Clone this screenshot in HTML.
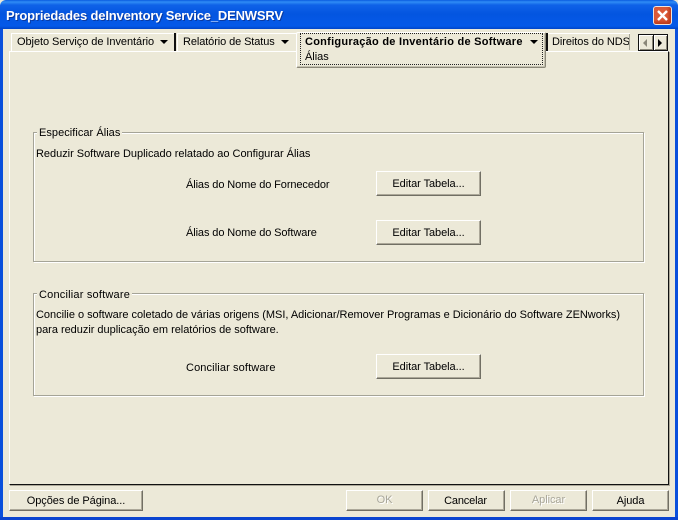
<!DOCTYPE html>
<html><head><meta charset="utf-8">
<style>
html,body{margin:0;padding:0;}
body{width:678px;height:520px;overflow:hidden;position:relative;background:#ECE9D8;font-family:"Liberation Sans",sans-serif;font-size:11px;color:#000;}
.a{position:absolute;box-sizing:border-box;}
.t{position:absolute;white-space:nowrap;line-height:13px;letter-spacing:-.025px;}
.btn{position:absolute;box-sizing:border-box;background:#ECE9D8;border-top:1px solid #fff;border-left:1px solid #fff;border-right:1px solid #716f64;border-bottom:1px solid #716f64;box-shadow:inset -1px -1px 0 #aca899;text-align:center;line-height:25px;white-space:nowrap;letter-spacing:-.06px;}
.dis{color:#a8a699;text-shadow:1px 1px 0 #fff;}
.arr{position:absolute;width:0;height:0;border-left:4px solid transparent;border-right:4px solid transparent;border-top:4px solid #000;}
.gb{position:absolute;box-sizing:border-box;border:1px solid #a5a497;box-shadow:1px 1px 0 #fff, inset 1px 1px 0 #fff;}
.leg{position:absolute;background:#ECE9D8;white-space:nowrap;line-height:13px;padding:0 2px;letter-spacing:.04px;}
</style></head><body>
<div class="a" style="left:0;top:0;width:678px;height:29px;background:linear-gradient(to bottom,#0a5be0 0,#2f8cf5 2px,#0f62e8 5px,#0355e0 14px,#0458e6 22px,#0459e8 26px,#0044c8 29px);border-radius:6px 6px 0 0;"></div>
<div class="a" style="left:0;top:29px;width:3px;height:491px;background:#0a50dc;"></div>
<div class="a" style="right:0;top:29px;width:3px;height:491px;background:#0a50dc;"></div>
<div class="a" style="left:0;top:517px;width:678px;height:3px;background:#0a44d0;"></div>
<div class="t" style="left:6px;top:8px;font-size:13px;line-height:16px;font-weight:bold;color:#fff;text-shadow:1px 1px 0 #0a3aa0;letter-spacing:-.17px;">Propriedades deInventory Service_DENWSRV</div>
<div class="a" style="left:653px;top:6px;width:19px;height:19px;background:#dc5a38;border:1px solid #f0e4dc;border-radius:3px;box-shadow:inset -2px -2px 3px #b83818;">
<svg width="17" height="17" style="position:absolute;left:0;top:0"><path d="M4 4L13 13M13 4L4 13" stroke="#fff" stroke-width="2.4"/></svg></div>

<!-- panel -->
<div class="a" style="left:9px;top:51px;width:660px;height:434px;border-top:1px solid #fff;border-left:1px solid #fff;border-right:1px solid #111;border-bottom:1px solid #111;box-shadow:1px 1px 0 #aca899;"></div>

<!-- tabs -->
<div class="a" style="left:11px;top:33px;width:163px;height:18px;border-top:1px solid #fff;border-left:1px solid #fff;"></div>
<div class="a" style="left:174px;top:33px;width:2px;height:18px;background:#111;"></div>
<div class="t" style="left:17px;top:36px;letter-spacing:-.06px;">Objeto Serviço de Inventário</div>
<div class="arr" style="left:160px;top:40px;"></div>
<div class="a" style="left:177px;top:33px;width:119px;height:18px;border-top:1px solid #fff;border-left:1px solid #fff;"></div>
<div class="t" style="left:183px;top:36px;letter-spacing:-.1px;">Relatório de Status</div>
<div class="arr" style="left:281px;top:40px;"></div>

<div class="a" style="left:296px;top:32px;width:250px;height:36px;background:#ECE9D8;border-top:1px solid #fff;border-left:1px solid #fff;border-right:1px solid #8a8778;border-bottom:1px solid #8a8778;border-radius:2px;box-shadow:inset -1px -1px 0 #c4c1b0;"></div>
<div class="a" style="left:300px;top:33px;width:243px;height:32px;border:1px dotted #222;"></div>
<div class="t" style="left:305px;top:36px;font-weight:bold;letter-spacing:.26px;">Configuração de Inventário de Software</div>
<div class="arr" style="left:530px;top:40px;"></div>
<div class="t" style="left:305px;top:51px;">Álias</div>

<div class="a" style="left:546px;top:33px;width:2px;height:18px;background:#111;"></div>
<div class="a" style="left:548px;top:33px;width:82px;height:18px;border-top:1px solid #fff;"></div>
<div class="t" style="left:552px;top:36px;letter-spacing:-.06px;">Direitos do NDS</div>
<div class="a" style="left:628px;top:34px;width:2px;height:16px;border-right:1px solid #a5a497;"></div>

<!-- scroll buttons -->
<div class="a" style="left:638px;top:34px;width:15px;height:17px;background:#ECE9D8;border:1px solid #111;border-right:0;box-shadow:inset 1px 1px 0 #fff,inset -1px -1px 0 #8a8778;"></div>
<div class="a" style="left:653px;top:34px;width:15px;height:17px;background:#ECE9D8;border:1px solid #111;box-shadow:inset 1px 1px 0 #fff,inset -1px -1px 0 #8a8778;"></div>
<div class="a" style="left:643px;top:39px;width:0;height:0;border-top:4px solid transparent;border-bottom:4px solid transparent;border-right:4px solid #8a8778;"></div>
<div class="a" style="left:658px;top:39px;width:0;height:0;border-top:4px solid transparent;border-bottom:4px solid transparent;border-left:4px solid #000;"></div>

<!-- group 1 -->
<div class="gb" style="left:33px;top:132px;width:611px;height:130px;"></div>
<div class="leg" style="left:37px;top:127px;">Especificar Álias</div>
<div class="t" style="left:36px;top:148px;">Reduzir Software Duplicado relatado ao Configurar Álias</div>
<div class="t" style="left:186px;top:179px;letter-spacing:-.1px;">Álias do Nome do Fornecedor</div>
<div class="btn" style="left:376px;top:171px;width:105px;height:25px;">Editar Tabela...</div>
<div class="t" style="left:186px;top:227px;letter-spacing:-.1px;">Álias do Nome do Software</div>
<div class="btn" style="left:376px;top:220px;width:105px;height:25px;">Editar Tabela...</div>

<!-- group 2 -->
<div class="gb" style="left:33px;top:293px;width:611px;height:103px;"></div>
<div class="leg" style="left:37px;top:289px;letter-spacing:.2px;">Conciliar software</div>
<div class="t" style="left:36px;top:309px;">Concilie o software coletado de várias origens (MSI, Adicionar/Remover Programas e Dicionário do Software ZENworks)</div>
<div class="t" style="left:36px;top:324px;">para reduzir duplicação em relatórios de software.</div>
<div class="t" style="left:186px;top:362px;letter-spacing:.12px;">Conciliar software</div>
<div class="btn" style="left:376px;top:354px;width:105px;height:25px;">Editar Tabela...</div>

<!-- bottom buttons -->
<div class="btn" style="left:9px;top:490px;width:134px;height:21px;line-height:20px;">Opções de Página...</div>
<div class="btn dis" style="left:346px;top:490px;width:77px;height:21px;line-height:19px;">OK</div>
<div class="btn" style="left:428px;top:490px;width:77px;height:21px;line-height:20px;padding-right:2px;letter-spacing:-.15px;">Cancelar</div>
<div class="btn dis" style="left:510px;top:490px;width:77px;height:21px;line-height:19px;">Aplicar</div>
<div class="btn" style="left:592px;top:490px;width:77px;height:21px;line-height:20px;">Ajuda</div>
</body></html>
